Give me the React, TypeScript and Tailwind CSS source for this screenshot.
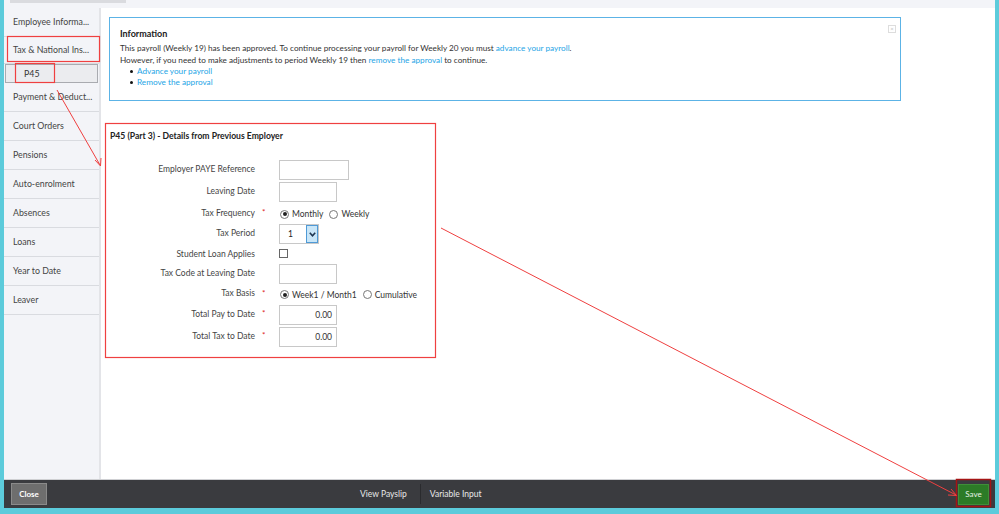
import React from "react";

const font = { fontFamily: "Lato, 'Open Sans', 'Liberation Sans', sans-serif" };

function SideItem({ label, h = "h-[29px]" }: { label: string; h?: string }) {
  return (
    <div className={`${h} flex items-center pl-[9px] border-b border-[#d9dbe0] text-[8.8px] text-[#444] whitespace-nowrap`}>
      {label}
    </div>
  );
}

function Radio({ checked }: { checked?: boolean }) {
  return (
    <span className="w-[9px] h-[9px] rounded-full border border-[#777] bg-white flex items-center justify-center">
      {checked && <span className="w-[4px] h-[4px] rounded-full bg-[#222]" />}
    </span>
  );
}

function Row({
  label,
  req,
  h = "h-[20px]",
  mt = "",
  children,
}: {
  label: string;
  req?: boolean;
  h?: string;
  mt?: string;
  children: React.ReactNode;
}) {
  return (
    <div className={`flex items-center ${h} ${mt}`}>
      <div className="w-[146px] text-right text-[8.5px] text-[#444] pb-[2px]">{label}</div>
      <div className="w-[24px] pl-[7px] text-[8px] text-[#d22] pb-[3px]">{req ? "*" : ""}</div>
      <div className="flex items-center">{children}</div>
    </div>
  );
}

function Input({ w, value }: { w: string; value?: string }) {
  return (
    <div className={`${w} h-[20px] border border-[#c8c8c8] bg-white flex items-center justify-end pr-[4px] text-[8.5px] text-[#333]`}>
      {value}
    </div>
  );
}

export default function App() {
  return (
    <div style={font} className="relative w-[999px] h-[514px] bg-[#5ccbdb] pl-[4px] pr-[4px] pb-[6px] flex flex-col overflow-hidden">
      {/* top bar */}
      <div className="h-[8px] bg-[#f3f4f8] flex shrink-0">
        <div className="ml-[6px] w-[116px] h-[3px] bg-[#dadbdf]" />
      </div>
      <div className="flex flex-1 min-h-0">
        {/* sidebar */}
        <div className="w-[97px] bg-[#f3f4f8] border-r-2 border-[#e3e4e8] flex flex-col">
          <SideItem label="Employee Informa..." />
          <SideItem label="Tax & National Ins..." h="h-[27px]" />
          <div className="h-[19px] mx-[1px] border border-[#a9abb0] bg-[#ebecef] flex items-center pl-[18px] text-[8.8px] text-[#333]">
            P45
          </div>
          <SideItem label="Payment & Deduct..." />
          <SideItem label="Court Orders" />
          <SideItem label="Pensions" />
          <SideItem label="Auto-enrolment" />
          <SideItem label="Absences" />
          <SideItem label="Loans" />
          <SideItem label="Year to Date" />
          <SideItem label="Leaver" />
        </div>
        {/* main */}
        <div className="flex-1 bg-white pl-[8px] pt-[9px]">
          <div className="relative w-[792px] h-[84px] border-[1.5px] border-[#5cb3e6] pl-[10px] pt-[10px] text-[8.2px] text-[#333] leading-[12px]">
            <div className="absolute right-[4px] top-[7px] w-[8px] h-[8px] border border-[#ddd] text-[6px] leading-[6px] text-[#bbb] flex items-center justify-center">
              ×
            </div>
            <div className="text-[9px] font-bold text-[#222] mb-[2px]">Information</div>
            <div>
              This payroll (Weekly 19) has been approved. To continue processing your payroll for Weekly 20 you must{" "}
              <span className="text-[#1ea5e6]">advance your payroll</span>.
            </div>
            <div>
              However, if you need to make adjustments to period Weekly 19 then{" "}
              <span className="text-[#1ea5e6]">remove the approval</span> to continue.
            </div>
            <ul className="pl-[10px] leading-[11px]">
              <li className="flex items-center gap-[4px]">
                <span className="w-[3px] h-[3px] rounded-full bg-[#111]" />
                <span className="text-[#1ea5e6]">Advance your payroll</span>
              </li>
              <li className="flex items-center gap-[4px]">
                <span className="w-[3px] h-[3px] rounded-full bg-[#111]" />
                <span className="text-[#1ea5e6]">Remove the approval</span>
              </li>
            </ul>
          </div>

          <div className="mt-[29px] pl-[1px] text-[8.6px] font-bold text-[#222]">
            P45 (Part 3) - Details from Previous Employer
          </div>
          <div className="mt-[17px] flex flex-col">
            <Row label="Employer PAYE Reference">
              <Input w="w-[70px]" />
            </Row>
            <Row label="Leaving Date" mt="mt-[2px]">
              <Input w="w-[58px]" />
            </Row>
            <Row label="Tax Frequency" req h="h-[22px]" mt="mt-[1px]">
              <div className="flex items-center text-[8.5px] text-[#333] pl-[1px] pt-[1px]">
                <Radio checked />
                <span className="ml-[3px]">Monthly</span>
                <span className="ml-[6px]"><Radio /></span>
                <span className="ml-[3px]">Weekly</span>
              </div>
            </Row>
            <Row label="Tax Period" h="h-[19px]">
              <div className="w-[40px] h-[20px] border border-[#c8c8c8] bg-white flex items-stretch">
                <div className="flex-1 flex items-center pl-[8px] text-[8.5px] text-[#222]">1</div>
                <div className="w-[12px] bg-[#c9e6f8] border border-[#4f9ad6] flex items-center justify-center">
                  <svg width="7" height="5" viewBox="0 0 7 5">
                    <path d="M0.8 0.8 L3.5 3.8 L6.2 0.8" fill="none" stroke="#1d3550" strokeWidth="1.6" />
                  </svg>
                </div>
              </div>
            </Row>
            <Row label="Student Loan Applies" h="h-[18px]" mt="mt-[2px]">
              <div className="w-[9px] h-[9px] border border-[#666] bg-white mb-[2px]" />
            </Row>
            <Row label="Tax Code at Leaving Date">
              <Input w="w-[58px]" />
            </Row>
            <Row label="Tax Basis" req h="h-[21px]">
              <div className="flex items-center text-[8.5px] text-[#333] pl-[1px] pt-[1px]">
                <Radio checked />
                <span className="ml-[3px]">Week1 / Month1</span>
                <span className="ml-[6px]"><Radio /></span>
                <span className="ml-[3px]">Cumulative</span>
              </div>
            </Row>
            <Row label="Total Pay to Date" req>
              <Input w="w-[58px]" value="0.00" />
            </Row>
            <Row label="Total Tax to Date" req mt="mt-[2px]">
              <Input w="w-[58px]" value="0.00" />
            </Row>
          </div>
        </div>
      </div>
      {/* footer */}
      <div className="h-[29px] bg-[#3a3b3f] border-t border-[#cfd0d3] flex items-center pl-[7px] pr-[6px] shrink-0">
        <div className="w-[36px] h-[22px] bg-[#6e6e6e] border border-[#8a8a8a] flex items-center justify-center text-[8px] font-bold text-white">
          Close
        </div>
        <div className="flex items-center h-full text-[8.5px] text-[#e8e8e8] ml-[300px]">
          <span className="px-[13px]">View Payslip</span>
          <span className="w-px h-[20px] bg-[#2a2b2e]" />
          <span className="pl-[9px]">Variable Input</span>
        </div>
        <div className="ml-auto w-[31px] h-[21px] bg-[#2c7b27] border border-[#3f8f39] flex items-center justify-center text-[8px] text-[#e8f3e6]">
          Save
        </div>
      </div>

      {/* annotation overlay */}
      <svg className="absolute left-0 top-0 pointer-events-none" width="999" height="514" viewBox="0 0 999 514">
        <rect x="7.5" y="36.5" width="92" height="25" fill="none" stroke="#ef4040" strokeWidth="1.2" />
        <rect x="15.5" y="63.5" width="39" height="19" fill="none" stroke="#ef4040" strokeWidth="1.2" />
        <rect x="105.5" y="123.5" width="330" height="234" fill="none" stroke="#ef4040" strokeWidth="1.2" />
        <rect x="956.5" y="479.5" width="34" height="27" fill="none" stroke="#a51414" strokeWidth="1.5" />
        <line x1="57" y1="90" x2="100" y2="165" stroke="#ef4040" strokeWidth="1" />
        <path d="M100.5 166 L95 160 M100.5 166 L101 158" stroke="#ef4040" strokeWidth="1" fill="none" />
        <line x1="441" y1="228" x2="956" y2="495" stroke="#ef4040" strokeWidth="1" />
        <path d="M956.5 495.5 L948 495 M956.5 495.5 L951 489" stroke="#ef4040" strokeWidth="1" fill="none" />
      </svg>
    </div>
  );
}
